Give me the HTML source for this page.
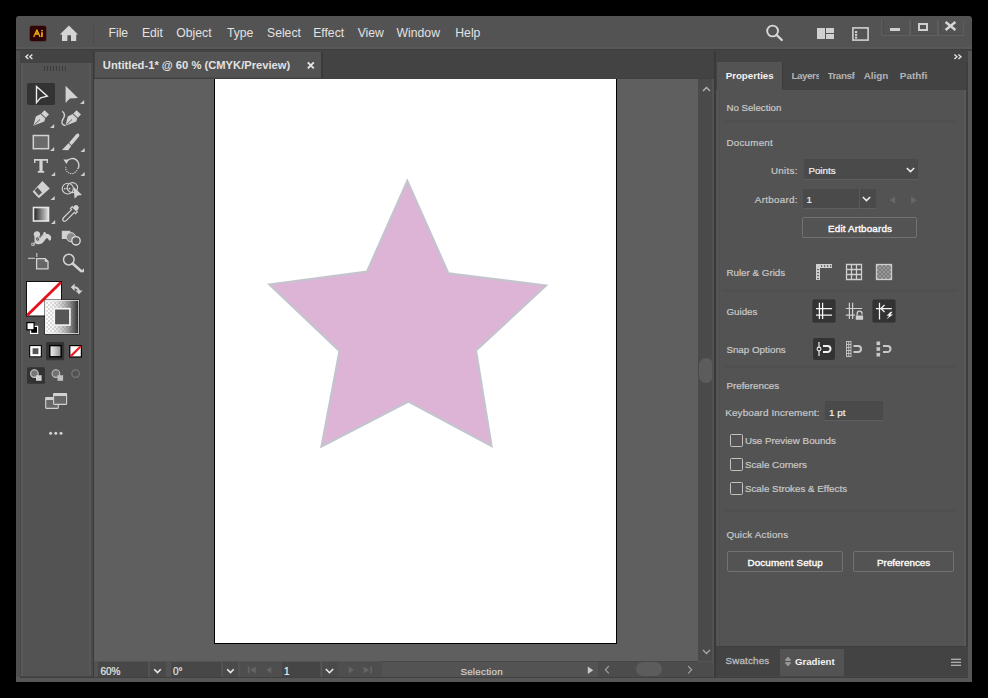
<!DOCTYPE html>
<html><head><meta charset="utf-8">
<style>
*{margin:0;padding:0;box-sizing:border-box}
html,body{width:988px;height:698px;background:#000;overflow:hidden}
body{position:relative;font-family:"Liberation Sans",sans-serif}
.a{position:absolute}
.t{position:absolute;white-space:nowrap}
svg{shape-rendering:geometricPrecision}
</style></head><body>
<div class="a" style="left:16px;top:16px;width:956px;height:666px;background:#535353;border-radius:3px 3px 0 0"></div>
<div class="a" style="left:30px;top:26px;width:16px;height:15px;background:#2e0404;border-radius:2px;box-shadow:0 0 0 0.6px #4a2a2a"></div>
<svg class="a" style="left:30px;top:26px;" width="16" height="15" viewBox="0 0 16 15"><path d="M6.9 3.8 L3.7 11 M6.9 3.8 L10.1 11 M5.1 8 H8.7" fill="none" stroke="#f2ac0c" stroke-width="1.25"/><circle cx="6.9" cy="6.8" r="1" fill="none" stroke="#f2ac0c" stroke-width="0.9"/><rect x="11.1" y="6.2" width="1.7" height="4.8" fill="#f2ac0c"/><rect x="11.1" y="4" width="1.7" height="1.3" fill="#f2ac0c"/></svg>
<svg class="a" style="left:59px;top:24px;" width="21" height="18" viewBox="0 0 21 18"><path d="M9.9 1.5 L19 10.6 L17.2 10.6 L17.2 17 L12 17 L12 11.2 L8.4 11.2 L8.4 17 L3 17 L3 10.6 L0.8 10.6 Z" fill="#d4d4d4"/></svg>
<div class="a" style="left:93px;top:24px;width:1px;height:20px;background:#4b4b4b;"></div>
<div class="t" style="left:108.50px;top:27.47px;font-size:12.2px;line-height:12.2px;font-weight:normal;color:#e2e2e2;">File</div>
<div class="t" style="left:141.90px;top:27.47px;font-size:12.2px;line-height:12.2px;font-weight:normal;color:#e2e2e2;">Edit</div>
<div class="t" style="left:176.30px;top:27.47px;font-size:12.2px;line-height:12.2px;font-weight:normal;color:#e2e2e2;">Object</div>
<div class="t" style="left:226.90px;top:27.47px;font-size:12.2px;line-height:12.2px;font-weight:normal;color:#e2e2e2;">Type</div>
<div class="t" style="left:267.00px;top:27.47px;font-size:12.2px;line-height:12.2px;font-weight:normal;color:#e2e2e2;">Select</div>
<div class="t" style="left:313.20px;top:27.47px;font-size:12.2px;line-height:12.2px;font-weight:normal;color:#e2e2e2;">Effect</div>
<div class="t" style="left:357.70px;top:27.47px;font-size:12.2px;line-height:12.2px;font-weight:normal;color:#e2e2e2;">View</div>
<div class="t" style="left:396.60px;top:27.47px;font-size:12.2px;line-height:12.2px;font-weight:normal;color:#e2e2e2;">Window</div>
<div class="t" style="left:455.30px;top:27.47px;font-size:12.2px;line-height:12.2px;font-weight:normal;color:#e2e2e2;">Help</div>
<svg class="a" style="left:764px;top:23px;" width="20" height="19" viewBox="0 0 20 19"><circle cx="8.6" cy="8" r="5.4" fill="none" stroke="#d8d8d8" stroke-width="1.9"/><path d="M12.6 12 L17.8 17" stroke="#d8d8d8" stroke-width="2.4" stroke-linecap="round"/></svg>
<div class="a" style="left:817px;top:28px;width:8px;height:11px;background:#d0d0d0;"></div>
<div class="a" style="left:826px;top:28px;width:8px;height:5px;background:#d0d0d0;"></div>
<div class="a" style="left:826px;top:34px;width:8px;height:5px;background:#d0d0d0;"></div>
<svg class="a" style="left:852px;top:27px;" width="17" height="14" viewBox="0 0 17 14"><rect x="0.9" y="0.9" width="15.2" height="12.2" fill="none" stroke="#d0d0d0" stroke-width="1.6"/><rect x="3" y="4" width="2.2" height="2" fill="#d0d0d0"/><rect x="3" y="6.8" width="2.2" height="2" fill="#d0d0d0"/><rect x="3" y="9.6" width="2.2" height="2" fill="#d0d0d0"/></svg>
<div class="a" style="left:881px;top:20px;width:29px;height:16px;background:transparent;border-left:1px solid #5d5d5d;border-right:1px solid #5d5d5d;border-bottom:1px solid #5f5f5f"></div>
<div class="a" style="left:883px;top:20px;width:1px;height:13px;background:#4d4d4d;"></div>
<div class="a" style="left:883px;top:33px;width:25px;height:1px;background:#4f4f4f;"></div>
<div class="a" style="left:910px;top:20px;width:28px;height:16px;background:transparent;border-left:1px solid #5d5d5d;border-right:1px solid #5d5d5d;border-bottom:1px solid #5f5f5f"></div>
<div class="a" style="left:912px;top:20px;width:1px;height:13px;background:#4d4d4d;"></div>
<div class="a" style="left:912px;top:33px;width:24px;height:1px;background:#4f4f4f;"></div>
<div class="a" style="left:938px;top:20px;width:26px;height:16px;background:transparent;border-left:1px solid #5d5d5d;border-right:1px solid #5d5d5d;border-bottom:1px solid #5f5f5f"></div>
<div class="a" style="left:940px;top:20px;width:1px;height:13px;background:#4d4d4d;"></div>
<div class="a" style="left:940px;top:33px;width:22px;height:1px;background:#4f4f4f;"></div>
<div class="a" style="left:890px;top:28px;width:10px;height:3px;background:#cfcfcf;"></div>
<div class="a" style="left:918px;top:23px;width:10px;height:8px;background:transparent;border:2px solid #cfcfcf"></div>
<svg class="a" style="left:944px;top:21px;" width="13" height="10" viewBox="0 0 13 10"><path d="M1.6 1 L11.4 9 M11.4 1 L1.6 9" stroke="#d8d8d8" stroke-width="2.3"/></svg>
<div class="a" style="left:16px;top:47px;width:956px;height:2px;background:#585858;"></div>
<div class="a" style="left:16px;top:49px;width:956px;height:1px;background:#3c3c3c;"></div>
<div class="a" style="left:16px;top:50px;width:956px;height:1px;background:#444444;"></div>
<div class="a" style="left:16px;top:51px;width:4px;height:626px;background:#4f4f4f;"></div>
<div class="a" style="left:20px;top:51px;width:74px;height:626px;background:#474747;"></div>
<div class="a" style="left:20px;top:51px;width:73px;height:12px;background:#434343;"></div>
<div class="a" style="left:21px;top:63px;width:70px;height:613px;background:#535353;"></div>
<div class="a" style="left:21px;top:63px;width:2px;height:613px;background:#595959;"></div>
<div class="a" style="left:89px;top:63px;width:2px;height:613px;background:#585858;"></div>
<div class="a" style="left:91px;top:63px;width:2px;height:613px;background:#4a4a4a;"></div>
<div class="a" style="left:93px;top:51px;width:1px;height:626px;background:#3a3a3a;"></div>
<div class="a" style="left:21px;top:676px;width:72px;height:1px;background:#474747;"></div>
<svg class="a" style="left:24px;top:53px;" width="10" height="8" viewBox="0 0 10 8"><path d="M4.4 1.6 L1.8 3.8 L4.4 6 M8.4 1.6 L5.8 3.8 L8.4 6" fill="none" stroke="#e6e6e6" stroke-width="1.3"/></svg>
<div class="a" style="left:44px;top:66px;width:22px;height:5px;background:repeating-linear-gradient(90deg,#3c3c3c 0 1px,transparent 1px 3px)"></div>
<svg class="a" style="left:0;top:0" width="988" height="698" viewBox="0 0 988 698"><rect x="27" y="83" width="28" height="22" rx="2" fill="#333333"/><path d="M36.5 86.5 L47.3 96.2 L40.6 97.8 L36.5 102.6 Z" fill="none" stroke="#ececec" stroke-width="1.4" stroke-linejoin="miter"/><path d="M65.6 85.8 L78 98 L69.8 98.6 L65.6 103 Z" fill="#d2d2d2"/><path d="M84.2 100 L84.2 104 L80 104 Z" fill="#cfcfcf"/><g transform="translate(0,0)"><path d="M41.3 113.4 L44.6 110.2 L49 114.6 L45.8 117.7 Z" fill="#d2d2d2"/><path d="M40.6 114 L45.2 118.5 L44.3 121.6 L33.4 125.8 L35.8 116.5 Z" fill="#d2d2d2"/><path d="M34.5 124.7 L40 119.5" stroke="#555" stroke-width="0.9"/></g><path d="M54.2 124 L54.2 128 L50 128 Z" fill="#cfcfcf"/><g transform="translate(32,0)"><path d="M41.3 113.4 L44.6 110.2 L49 114.6 L45.8 117.7 Z" fill="#d2d2d2"/><path d="M40.6 114 L45.2 118.5 L44.3 121.6 L33.4 125.8 L35.8 116.5 Z" fill="#d2d2d2"/><path d="M34.5 124.7 L40 119.5" stroke="#555" stroke-width="0.9"/></g><path d="M62.3 111.3 C65 113.5 65 116.5 62.8 119.5 C60.8 122.5 62 125.2 65.4 125.6" fill="none" stroke="#d2d2d2" stroke-width="1.4"/><rect x="33.3" y="135.5" width="15.2" height="13.2" fill="#6a6a6a" stroke="#d2d2d2" stroke-width="1.5"/><path d="M54.2 147 L54.2 151 L50 151 Z" fill="#cfcfcf"/><path d="M78.6 133.8 C79.8 134.8 79.5 136 78.6 137 L71.6 145.2 L69 142.8 L76 134.4 C76.9 133.5 77.8 133.2 78.6 133.8 Z" fill="#d2d2d2"/><path d="M68.4 143.3 L71.2 146 L68.2 150.2 L62 150 Z" fill="#d2d2d2"/><path d="M84.7 148 L84.7 152 L80.5 152 Z" fill="#cfcfcf"/><path d="M34 159 H48 V163 H46.6 V160.8 H42.6 V171 H44.2 V172.8 H37.8 V171 H39.4 V160.8 H35.4 V163 H34 Z" fill="#d2d2d2"/><path d="M55.2 172 L55.2 176 L51 176 Z" fill="#cfcfcf"/><path d="M67 161.2 A5.8 5.8 0 1 1 77.6 169.2" fill="none" stroke="#d2d2d2" stroke-width="1.4"/><path d="M76.8 170.2 A5.8 5.8 0 0 1 65.8 166.8" fill="none" stroke="#d2d2d2" stroke-width="1.2" stroke-dasharray="1.2 1"/><path d="M63.4 159.4 L68.6 159.6 L66.6 164 Z" fill="#d2d2d2"/><path d="M84.7 172 L84.7 176 L80.5 176 Z" fill="#cfcfcf"/><path d="M42.4 181 L49.8 188.6 L38.8 198.2 L32.6 191.8 Z" fill="#d2d2d2"/><path d="M34.5 190.5 L37.6 187.6 L42 192.5 L38.8 195.6 Z" fill="#555"/><path d="M54.7 196 L54.7 200 L50.5 200 Z" fill="#cfcfcf"/><ellipse cx="67.8" cy="188.6" rx="5.6" ry="5.4" fill="none" stroke="#d2d2d2" stroke-width="1.1"/><ellipse cx="72.4" cy="187.6" rx="5.2" ry="5" fill="none" stroke="#d2d2d2" stroke-width="1.1"/><circle cx="64.8" cy="188.6" r="0.9" fill="#d2d2d2"/><circle cx="67.2" cy="188.6" r="0.9" fill="#d2d2d2"/><circle cx="69.6" cy="188.6" r="0.9" fill="#d2d2d2"/><path d="M73.6 186.8 L82 195 L77.8 195.6 L74.6 198.8 Z" fill="#d2d2d2"/><defs><linearGradient id="g1" x1="0" x2="1"><stop offset="0" stop-color="#1e1e1e"/><stop offset="1" stop-color="#e0e0e0"/></linearGradient><linearGradient id="g2" x1="0" x2="1"><stop offset="0" stop-color="#ffffff" stop-opacity="0"/><stop offset="1" stop-color="#2e2e2e"/></linearGradient><pattern id="chk" width="4" height="4" patternUnits="userSpaceOnUse"><rect width="4" height="4" fill="#ffffff"/><rect width="2" height="2" fill="#d8d8d8"/><rect x="2" y="2" width="2" height="2" fill="#d8d8d8"/></pattern></defs><rect x="33.5" y="207.5" width="15" height="13.5" fill="url(#g1)" stroke="#e6e6e6" stroke-width="1.6"/><path d="M55.2 220 L55.2 224 L51 224 Z" fill="#cfcfcf"/><path d="M74.6 206.3 C76.6 204.6 79.2 206.6 77.8 209 L76.2 210.6 L77.4 211.8 L75.6 213.6 L74.4 212.4 L67 219.8 C65.6 221.2 63.8 221.4 63.2 220.8 C62.6 220.2 62.8 218.4 64.2 217 L71.6 209.6 L70.4 208.4 L72.2 206.6 L73.4 207.8 Z" fill="none" stroke="#d2d2d2" stroke-width="1.2"/><path d="M74.6 206.3 C76.6 204.6 79.2 206.6 77.8 209 L75.8 211 L73 208.2 Z" fill="#d2d2d2"/><path d="M34 233 C35.5 230.5 39 230.6 40 233.2 C40.8 235.5 39 236.6 38.2 238.5 C40.5 238.6 42.5 236.2 44 234.6 C46 232.8 49.8 233.6 51 236.5 C51.8 238.8 50.6 241.2 49.2 240.6 C48.2 240 48.6 237.8 46.8 238.2 C45 238.8 44.2 242.2 41.6 243.6 C39.6 244.6 36.2 244.4 35 243 C34 241.6 34.8 238.6 34.4 236.6 C34 235.4 33.4 234 34 233 Z" fill="#d2d2d2"/><circle cx="37.6" cy="239" r="2.2" fill="#555" stroke="#d2d2d2" stroke-width="1"/><path d="M36.2 240.4 L39 237.6" stroke="#d2d2d2" stroke-width="0.8"/><path d="M33 244.5 L35.6 242" stroke="#d2d2d2" stroke-width="1"/><rect x="31.8" y="243.2" width="2.4" height="2.4" fill="none" stroke="#d2d2d2" stroke-width="0.8"/><path d="M40.5 237 L44 234" stroke="#d2d2d2" stroke-width="1"/><circle cx="44.6" cy="233.4" r="1.3" fill="#d2d2d2"/><rect x="61.8" y="230.8" width="8.6" height="8.2" fill="#d2d2d2"/><circle cx="71" cy="237.2" r="4.6" fill="#8a8a8a" stroke="#d2d2d2" stroke-width="1"/><circle cx="76" cy="240.8" r="4.2" fill="#5a5a5a" stroke="#e0e0e0" stroke-width="1.3"/><path d="M36.6 258.6 H45.2 L48 261.4 V268.8 H36.6 Z" fill="#666" stroke="#d2d2d2" stroke-width="1.3"/><path d="M45.2 258.6 V261.4 H48" fill="#d2d2d2" stroke="#d2d2d2" stroke-width="1"/><path d="M28 258.3 H35 M36.8 253 V257" stroke="#d2d2d2" stroke-width="1"/><circle cx="68.8" cy="259.6" r="5.3" fill="none" stroke="#d2d2d2" stroke-width="1.5"/><path d="M72.6 263.6 L80.8 270.8" stroke="#d2d2d2" stroke-width="2.6" stroke-linecap="round"/><path d="M84 268.2 L84 272.2 L80 272.2 Z" fill="#d2d2d2"/><rect x="26.5" y="281.5" width="35" height="34.5" fill="#ffffff" stroke="#111" stroke-width="1"/><path d="M27.3 315.2 L61 282.2" stroke="#e8101c" stroke-width="2.8"/><rect x="44.5" y="299.5" width="35" height="35" fill="#1a1a1a"/><rect x="45.8" y="300.8" width="32.4" height="32.4" fill="url(#chk)" stroke="#f2f2f2" stroke-width="1.6"/><rect x="45.7" y="300.7" width="32.6" height="32.6" fill="url(#g2)"/><rect x="54.3" y="308.7" width="15.6" height="16.4" fill="#565656" stroke="#f6f6f6" stroke-width="1.6"/><path d="M73.4 287.2 C76.6 287.2 78.8 288.8 79.2 291.6" fill="none" stroke="#d2d2d2" stroke-width="1.9"/><path d="M70.8 287.2 L74.6 283.4 L74.6 291 Z" fill="#d2d2d2"/><path d="M75.4 290.6 L82.6 290.6 L79 294.2 Z" fill="#d2d2d2"/><rect x="30.6" y="326.4" width="7" height="7" fill="#000" stroke="#fff" stroke-width="1.2"/><rect x="26.9" y="322.6" width="7.2" height="7.2" fill="#fff" stroke="#000" stroke-width="1.2"/><rect x="29.2" y="345.1" width="12.6" height="12.2" fill="#000"/><rect x="30.2" y="346.1" width="10.6" height="10.2" fill="#fff"/><rect x="32.6" y="348.3" width="5.8" height="5.8" fill="#555"/><rect x="46" y="342" width="18.2" height="18.2" rx="1.5" fill="#343434"/><rect x="49.8" y="345.6" width="11.4" height="11.2" fill="url(#g3)" stroke="#000" stroke-width="1.4"/><defs><linearGradient id="g3" x1="0" x2="1"><stop offset="0" stop-color="#f2f2f2"/><stop offset="0.5" stop-color="#c4c4c4"/><stop offset="1" stop-color="#8c8c8c"/></linearGradient></defs><rect x="69.8" y="345.6" width="11.6" height="11.4" fill="#fff" stroke="#000" stroke-width="1.2"/><path d="M70.6 356.4 L80.8 346.2" stroke="#ee1c24" stroke-width="2.2"/><rect x="27" y="367.2" width="18" height="16.6" rx="1.5" fill="#333333"/><g transform="translate(0,0)" opacity="1"><circle cx="34.4" cy="373.6" r="3.8" fill="#777" stroke="#d2d2d2" stroke-width="1.1"/><rect x="36" y="375.2" width="5.6" height="5.6" fill="#d2d2d2"/></g><g transform="translate(21.5,0)" opacity="0.85"><circle cx="34.4" cy="373.6" r="3.8" fill="#777" stroke="#d2d2d2" stroke-width="1.1"/><rect x="36" y="375.2" width="5.6" height="5.6" fill="#d2d2d2"/></g><circle cx="75.6" cy="373.6" r="3.8" fill="none" stroke="#777" stroke-width="1.2"/><rect x="45.7" y="397.6" width="12.6" height="10.8" rx="0.6" fill="#686868" stroke="#d2d2d2" stroke-width="1.1"/><rect x="45.7" y="397.6" width="12.6" height="2.4" fill="#d2d2d2"/><rect x="53.6" y="393.5" width="13" height="10.9" rx="0.6" fill="#686868" stroke="#d2d2d2" stroke-width="1.1"/><rect x="53.6" y="393.5" width="13" height="2.5" fill="#d2d2d2"/><circle cx="50.6" cy="433.2" r="1.5" fill="#d2d2d2"/><circle cx="55.8" cy="433.2" r="1.5" fill="#d2d2d2"/><circle cx="61" cy="433.2" r="1.5" fill="#d2d2d2"/></svg>
<div class="a" style="left:94px;top:51px;width:622px;height:28px;background:#434343;"></div>
<div class="a" style="left:95px;top:52px;width:226px;height:25px;background:#535353;"></div>
<div class="a" style="left:95px;top:77px;width:226px;height:1px;background:#4c4c4c;"></div>
<div class="a" style="left:321px;top:52px;width:1.5px;height:26px;background:#3a3a3a;"></div>
<div class="t" style="left:102.80px;top:59.72px;font-size:11.2px;line-height:11.2px;font-weight:bold;color:#e2e2e2;">Untitled-1* @ 60 % (CMYK/Preview)</div>
<svg class="a" style="left:306px;top:61px;" width="10" height="9" viewBox="0 0 10 9"><path d="M1.8 1.4 L7.8 7.4 M7.8 1.4 L1.8 7.4" stroke="#e6e6e6" stroke-width="1.9"/></svg>
<div class="a" style="left:94px;top:78px;width:619px;height:1px;background:#3f3f3f;"></div>
<div class="a" style="left:94px;top:79px;width:604px;height:582px;background:#5f5f5f;"></div>
<div class="a" style="left:214px;top:79px;width:403px;height:565px;background:#ffffff;border:1px solid #000;border-top:none"></div>
<svg class="a" style="left:214px;top:79px;" width="403" height="565" viewBox="0 0 403 565"><defs><filter id="bl" x="-5%" y="-5%" width="110%" height="110%"><feGaussianBlur stdDeviation="0.7"/></filter></defs><polygon points="193.3,102 234.4,194.4 332,206.5 262,271.5 277.5,367 194.5,322.5 107.5,367.5 125.5,272 55.5,205.5 153.1,192.5" transform="translate(0,0)" fill="#deb4d6" stroke="#c4c4ce" stroke-width="2.2" stroke-linejoin="miter" filter="url(#bl)"/></svg>
<div class="a" style="left:698px;top:79px;width:15px;height:582px;background:#4a4a4a;"></div>
<svg class="a" style="left:702px;top:86px;" width="9" height="6" viewBox="0 0 9 6"><path d="M1 5 L4.5 1.5 L8 5" fill="none" stroke="#b4b4b4" stroke-width="1.4"/></svg>
<svg class="a" style="left:702px;top:649px;" width="9" height="6" viewBox="0 0 9 6"><path d="M1 1 L4.5 4.5 L8 1" fill="none" stroke="#a8a8a8" stroke-width="1.3"/></svg>
<div class="a" style="left:699px;top:358px;width:14px;height:25px;background:#5c5c5c;border-radius:7px 7px 7px 7px"></div>
<div class="a" style="left:712px;top:79px;width:2px;height:582px;background:#525252;"></div>
<div class="a" style="left:714px;top:51px;width:2px;height:626px;background:#3a3a3a;"></div>
<div class="a" style="left:716px;top:51px;width:1px;height:626px;background:#474747;"></div>
<div class="a" style="left:94px;top:661px;width:619px;height:16px;background:#535353;"></div>
<div class="a" style="left:98px;top:662px;width:50px;height:15px;background:#474747;"></div>
<div class="a" style="left:150px;top:662px;width:16px;height:15px;background:#4a4a4a;"></div>
<div class="t" style="left:100.40px;top:666.53px;font-size:10px;line-height:10px;font-weight:normal;color:#e6e6e6;-webkit-text-stroke:0.2px #e6e6e6;">60%</div>
<svg class="a" style="left:153px;top:668px;" width="9" height="6" viewBox="0 0 9 6"><path d="M1.2 1.2 L4.5 4.5 L7.8 1.2" fill="none" stroke="#e8e8e8" stroke-width="1.6"/></svg>
<div class="a" style="left:171px;top:662px;width:50px;height:15px;background:#474747;"></div>
<div class="a" style="left:223px;top:662px;width:15px;height:15px;background:#4a4a4a;"></div>
<div class="t" style="left:172.90px;top:666.53px;font-size:10px;line-height:10px;font-weight:normal;color:#e6e6e6;-webkit-text-stroke:0.2px #e6e6e6;">0°</div>
<svg class="a" style="left:226px;top:668px;" width="9" height="6" viewBox="0 0 9 6"><path d="M1.2 1.2 L4.5 4.5 L7.8 1.2" fill="none" stroke="#e8e8e8" stroke-width="1.6"/></svg>
<div class="a" style="left:240px;top:662px;width:142px;height:15px;background:#4e4e4e;"></div>
<svg class="a" style="left:247px;top:666px;" width="10" height="8" viewBox="0 0 10 8"><rect x="0.8" y="0.6" width="1.6" height="7" fill="#646464"/><path d="M8.8 0.6 L3 4.1 L8.8 7.6 Z" fill="#646464"/></svg>
<svg class="a" style="left:266px;top:666px;" width="6" height="8" viewBox="0 0 6 8"><path d="M5.4 0.6 L0.4 4.1 L5.4 7.6 Z" fill="#646464"/></svg>
<div class="a" style="left:282px;top:662px;width:38px;height:15px;background:#454545;"></div>
<div class="t" style="left:284.00px;top:666.53px;font-size:10px;line-height:10px;font-weight:normal;color:#f2f2f2;-webkit-text-stroke:0.2px #f2f2f2;">1</div>
<div class="a" style="left:321px;top:662px;width:17px;height:15px;background:#4a4a4a;border-left:1px solid #5a5a5a"></div>
<svg class="a" style="left:325px;top:668px;" width="9" height="6" viewBox="0 0 9 6"><path d="M0.8 1 L4.5 4.7 L8.2 1" fill="none" stroke="#eeeeee" stroke-width="1.5"/></svg>
<svg class="a" style="left:348px;top:666px;" width="6" height="8" viewBox="0 0 6 8"><path d="M0.8 0.6 L5.8 4.1 L0.8 7.6 Z" fill="#646464"/></svg>
<svg class="a" style="left:363px;top:666px;" width="10" height="8" viewBox="0 0 10 8"><path d="M0.6 0.6 L6.4 4.1 L0.6 7.6 Z" fill="#646464"/><rect x="7.4" y="0.6" width="1.6" height="7" fill="#646464"/></svg>
<div class="t" style="left:460.40px;top:666.70px;font-size:9.8px;line-height:9.8px;font-weight:normal;color:#d2d2d2;letter-spacing:0.25px;-webkit-text-stroke:0.2px #d2d2d2;">Selection</div>
<svg class="a" style="left:587px;top:666px;" width="7" height="9" viewBox="0 0 7 9"><path d="M0.8 0.4 L6.2 4.2 L0.8 8 Z" fill="#c8c8c8"/></svg>
<div class="a" style="left:382px;top:661px;width:316px;height:1px;background:#474747;"></div>
<div class="a" style="left:598px;top:662px;width:115px;height:15px;background:#4c4c4c;"></div>
<svg class="a" style="left:603px;top:665px;" width="8" height="10" viewBox="0 0 8 10"><path d="M5.8 1.2 L2.4 4.8 L5.8 8.4" fill="none" stroke="#a8a8a8" stroke-width="1.1"/></svg>
<div class="a" style="left:636px;top:662px;width:26px;height:14px;background:#5c5c5c;border-radius:7px"></div>
<svg class="a" style="left:686px;top:665px;" width="8" height="10" viewBox="0 0 8 10"><path d="M2.2 1.2 L5.6 4.8 L2.2 8.4" fill="none" stroke="#a8a8a8" stroke-width="1.1"/></svg>
<div class="a" style="left:716px;top:51px;width:256px;height:626px;background:#535353;"></div>
<div class="a" style="left:716px;top:51px;width:252px;height:11px;background:#434343;"></div>
<div class="a" style="left:716px;top:62px;width:250px;height:28px;background:#434343;"></div>
<div class="a" style="left:717px;top:62px;width:65px;height:28px;background:#535353;"></div>
<div class="a" style="left:782px;top:62px;width:1px;height:27px;background:#3c3c3c;"></div>
<div class="a" style="left:717px;top:90px;width:2px;height:557px;background:#555555;"></div>
<div class="a" style="left:719px;top:90px;width:1px;height:557px;background:#4f4f4f;"></div>
<div class="a" style="left:964px;top:90px;width:2px;height:557px;background:#595959;"></div>
<div class="a" style="left:966px;top:62px;width:2px;height:615px;background:#3e3e3e;"></div>
<svg class="a" style="left:953px;top:53px;" width="10" height="8" viewBox="0 0 10 8"><path d="M1.4 1.6 L4 3.8 L1.4 6 M5.4 1.6 L8 3.8 L5.4 6" fill="none" stroke="#e6e6e6" stroke-width="1.3"/></svg>
<div class="t" style="left:725.70px;top:70.99px;font-size:9.7px;line-height:9.7px;font-weight:bold;color:#f2f2f2;">Properties</div>
<div class="a" style="left:792px;top:68px;width:27px;height:14px;overflow:hidden">
<div class="t" style="left:-0.60px;top:2.82px;font-size:9.9px;line-height:9.9px;font-weight:bold;color:#b4b4b4;letter-spacing:-0.45px;">Layers</div>
</div>
<div class="a" style="left:828px;top:68px;width:27px;height:14px;overflow:hidden">
<div class="t" style="left:-0.60px;top:2.82px;font-size:9.9px;line-height:9.9px;font-weight:bold;color:#b4b4b4;letter-spacing:-0.45px;">Transform</div>
</div>
<div class="t" style="left:863.70px;top:70.82px;font-size:9.9px;line-height:9.9px;font-weight:bold;color:#b4b4b4;">Align</div>
<div class="a" style="left:900px;top:68px;width:28px;height:14px;overflow:hidden">
<div class="t" style="left:-0.20px;top:2.82px;font-size:9.9px;line-height:9.9px;font-weight:bold;color:#b4b4b4;">Pathfinder</div>
</div>
<div class="t" style="left:726.40px;top:102.89px;font-size:9.7px;line-height:9.7px;font-weight:normal;color:#c9c9c9;-webkit-text-stroke:0.2px #c9c9c9;">No Selection</div>
<div class="a" style="left:722px;top:120px;width:236px;height:3px;background:#505050;"></div>
<div class="t" style="left:726.40px;top:137.90px;font-size:9.8px;line-height:9.8px;font-weight:normal;color:#c9c9c9;letter-spacing:0.25px;-webkit-text-stroke:0.2px #c9c9c9;">Document</div>
<div class="t" style="left:770.90px;top:165.70px;font-size:9.8px;line-height:9.8px;font-weight:normal;color:#c9c9c9;letter-spacing:0.3px;-webkit-text-stroke:0.2px #c9c9c9;">Units:</div>
<div class="a" style="left:804px;top:159px;width:114px;height:21px;background:#4a4a4a;border-bottom:1px solid #5e5e5e"></div>
<div class="t" style="left:808.40px;top:165.90px;font-size:9.8px;line-height:9.8px;font-weight:normal;color:#f0f0f0;-webkit-text-stroke:0.2px #f0f0f0;">Points</div>
<svg class="a" style="left:906px;top:167px;" width="9" height="6" viewBox="0 0 9 6"><path d="M0.8 1 L4.5 4.6 L8.2 1" fill="none" stroke="#eeeeee" stroke-width="1.5"/></svg>
<div class="t" style="left:754.80px;top:194.70px;font-size:9.8px;line-height:9.8px;font-weight:normal;color:#c9c9c9;letter-spacing:0.3px;-webkit-text-stroke:0.2px #c9c9c9;">Artboard:</div>
<div class="a" style="left:803px;top:189px;width:56px;height:20px;background:#4a4a4a;border-bottom:1px solid #5e5e5e"></div>
<div class="a" style="left:859px;top:189px;width:17px;height:20px;background:#4a4a4a;border-left:1px solid #5a5a5a;border-bottom:1px solid #5e5e5e"></div>
<div class="t" style="left:806.40px;top:194.90px;font-size:9.8px;line-height:9.8px;font-weight:normal;color:#f0f0f0;-webkit-text-stroke:0.2px #f0f0f0;">1</div>
<svg class="a" style="left:862px;top:196px;" width="9" height="6" viewBox="0 0 9 6"><path d="M0.8 1 L4.5 4.6 L8.2 1" fill="none" stroke="#eeeeee" stroke-width="1.5"/></svg>
<svg class="a" style="left:889px;top:196px;" width="8" height="9" viewBox="0 0 8 9"><path d="M0.6 4.2 L6 0.6 L6 7.8 Z" fill="#686868"/></svg>
<svg class="a" style="left:910px;top:196px;" width="8" height="9" viewBox="0 0 8 9"><path d="M6.6 4.2 L1.2 0.6 L1.2 7.8 Z" fill="#686868"/></svg>
<div class="a" style="left:802px;top:217px;width:115px;height:21px;background:#535353;border:1px solid #727272;border-radius:2px"></div>
<div class="t" style="left:828.00px;top:223.82px;font-size:9.9px;line-height:9.9px;font-weight:normal;color:#ffffff;letter-spacing:0.15px;-webkit-text-stroke:0.35px #fff;">Edit Artboards</div>
<div class="t" style="left:726.40px;top:268.10px;font-size:9.8px;line-height:9.8px;font-weight:normal;color:#c9c9c9;-webkit-text-stroke:0.2px #c9c9c9;">Ruler &amp; Grids</div>
<svg class="a" style="left:815px;top:263px;" width="18" height="18" viewBox="0 0 18 18"><path d="M1 1 H17 V5 H5 V17 H1 Z" fill="#cfcfcf"/><g fill="#535353"><rect x="2.2" y="6" width="1.6" height="1.2"/><rect x="2.2" y="9" width="1.6" height="1.2"/><rect x="2.2" y="12" width="1.6" height="1.2"/><rect x="2.2" y="15" width="1.6" height="1.2"/><rect x="6" y="2.2" width="1.2" height="1.6"/><rect x="9" y="2.2" width="1.2" height="1.6"/><rect x="12" y="2.2" width="1.2" height="1.6"/><rect x="15" y="2.2" width="1.2" height="1.6"/></g></svg>
<svg class="a" style="left:845px;top:263px;" width="18" height="18" viewBox="0 0 18 18"><path d="M1.5 1.5 H16.5 V16.5 H1.5 Z M6.5 1.5 V16.5 M11.5 1.5 V16.5 M1.5 6.5 H16.5 M1.5 11.5 H16.5" fill="none" stroke="#cfcfcf" stroke-width="1.3"/></svg>
<svg class="a" style="left:875px;top:263px;" width="18" height="18" viewBox="0 0 18 18"><defs><pattern id="pg" width="4" height="4" patternUnits="userSpaceOnUse"><rect width="4" height="4" fill="#7a7a7a"/><rect width="2" height="2" fill="#9a9a9a"/><rect x="2" y="2" width="2" height="2" fill="#9a9a9a"/></pattern></defs><rect x="1.5" y="1.5" width="15" height="15" fill="url(#pg)" stroke="#cfcfcf" stroke-width="1.3"/></svg>
<div class="a" style="left:722px;top:289px;width:236px;height:3px;background:#505050;"></div>
<div class="t" style="left:726.40px;top:306.70px;font-size:9.8px;line-height:9.8px;font-weight:normal;color:#c9c9c9;-webkit-text-stroke:0.2px #c9c9c9;">Guides</div>
<div class="a" style="left:813px;top:300px;width:22px;height:22px;background:#333333;border-radius:1px;box-shadow:0 0 0 0.5px #2e2e2e"></div>
<svg class="a" style="left:813px;top:300px;" width="22" height="22" viewBox="0 0 22 22"><path d="M6.4 2.7 V19.1 M9.6 2.7 V19.1 M3 8.5 H19.1 M3 15.2 H19.1" stroke="#f6f6f6" stroke-width="1.25"/></svg>
<svg class="a" style="left:843px;top:300px;" width="22" height="22" viewBox="0 0 22 22"><path d="M6.4 2.7 V19.1 M9.6 2.7 V19.1 M2.8 8.5 H19.2 M2.8 15.2 H12" stroke="#cfcfcf" stroke-width="1.2"/><path d="M14.2 15.5 V13.6 A2.4 2.4 0 0 1 19 13.6 V14.4" fill="none" stroke="#cfcfcf" stroke-width="1.3"/><rect x="12.8" y="15.5" width="7.3" height="4.3" fill="#cfcfcf"/></svg>
<div class="a" style="left:873px;top:300px;width:22px;height:22px;background:#333333;border-radius:1px;box-shadow:0 0 0 0.5px #2e2e2e"></div>
<svg class="a" style="left:873px;top:300px;" width="22" height="22" viewBox="0 0 22 22"><path d="M6.5 2.7 V19.5 M2.9 8.5 H18.8 M11.5 5 L8 8.5 L11.5 12" fill="none" stroke="#f4f4f4" stroke-width="1.25"/><path d="M17.6 11.8 L13.6 15.8 H16.2 L13.4 19.2 L20.2 14.6 H17.4 L19.6 11.8 Z" fill="#f4f4f4"/></svg>
<div class="t" style="left:726.40px;top:345.10px;font-size:9.8px;line-height:9.8px;font-weight:normal;color:#c9c9c9;-webkit-text-stroke:0.2px #c9c9c9;">Snap Options</div>
<div class="a" style="left:813px;top:338px;width:22px;height:22px;background:#333333;border-radius:2px"></div>
<svg class="a" style="left:813px;top:338px;" width="22" height="22" viewBox="0 0 22 22"><path d="M6 4 V18" stroke="#f0f0f0" stroke-width="1.2"/><circle cx="6" cy="11" r="1.9" fill="#333" stroke="#f0f0f0" stroke-width="1.1"/><path d="M10 8 H14.5 A3 3 0 0 1 14.5 14 H10" fill="none" stroke="#f0f0f0" stroke-width="2"/></svg>
<svg class="a" style="left:843px;top:338px;" width="22" height="22" viewBox="0 0 22 22"><g fill="none" stroke="#c8c8c8" stroke-width="0.9"><rect x="3.5" y="3.5" width="4.5" height="15"/><path d="M3.5 6.5 H8 M3.5 9.5 H8 M3.5 12.5 H8 M3.5 15.5 H8 M5.75 3.5 V18.5"/></g><path d="M10.5 8 H15 A3 3 0 0 1 15 14 H10.5" fill="none" stroke="#c8c8c8" stroke-width="2"/></svg>
<svg class="a" style="left:873px;top:338px;" width="22" height="22" viewBox="0 0 22 22"><g fill="#c8c8c8"><rect x="3.5" y="3.5" width="3.6" height="3.6"/><rect x="3.5" y="9.2" width="3.6" height="3.6"/><rect x="3.5" y="14.9" width="3.6" height="3.6"/></g><path d="M10 8 H14.5 A3 3 0 0 1 14.5 14 H10" fill="none" stroke="#c8c8c8" stroke-width="2"/></svg>
<div class="a" style="left:722px;top:365px;width:236px;height:3px;background:#505050;"></div>
<div class="t" style="left:726.40px;top:381.10px;font-size:9.8px;line-height:9.8px;font-weight:normal;color:#c9c9c9;-webkit-text-stroke:0.2px #c9c9c9;">Preferences</div>
<div class="t" style="left:725.20px;top:407.78px;font-size:9.95px;line-height:9.95px;font-weight:normal;color:#c9c9c9;letter-spacing:0.11px;-webkit-text-stroke:0.2px #c9c9c9;">Keyboard Increment:</div>
<div class="a" style="left:825px;top:401px;width:58px;height:20px;background:#4a4a4a;border-bottom:1px solid #5e5e5e"></div>
<div class="t" style="left:829.00px;top:407.82px;font-size:9.9px;line-height:9.9px;font-weight:normal;color:#f0f0f0;-webkit-text-stroke:0.2px #f0f0f0;">1 pt</div>
<div class="a" style="left:730px;top:434px;width:12.5px;height:12.5px;background:transparent;border:1.2px solid #c2c2c2;border-radius:1.5px"></div>
<div class="t" style="left:744.90px;top:435.90px;font-size:9.8px;line-height:9.8px;font-weight:normal;color:#c9c9c9;-webkit-text-stroke:0.2px #c9c9c9;">Use Preview Bounds</div>
<div class="a" style="left:730px;top:458px;width:12.5px;height:12.5px;background:transparent;border:1.2px solid #c2c2c2;border-radius:1.5px"></div>
<div class="t" style="left:744.90px;top:459.90px;font-size:9.8px;line-height:9.8px;font-weight:normal;color:#c9c9c9;-webkit-text-stroke:0.2px #c9c9c9;">Scale Corners</div>
<div class="a" style="left:730px;top:482px;width:12.5px;height:12.5px;background:transparent;border:1.2px solid #c2c2c2;border-radius:1.5px"></div>
<div class="t" style="left:744.90px;top:483.90px;font-size:9.8px;line-height:9.8px;font-weight:normal;color:#c9c9c9;-webkit-text-stroke:0.2px #c9c9c9;">Scale Strokes &amp; Effects</div>
<div class="a" style="left:722px;top:509px;width:236px;height:3px;background:#505050;"></div>
<div class="t" style="left:726.40px;top:529.90px;font-size:9.8px;line-height:9.8px;font-weight:normal;color:#c9c9c9;letter-spacing:0.2px;-webkit-text-stroke:0.2px #c9c9c9;">Quick Actions</div>
<div class="a" style="left:727px;top:551px;width:116px;height:21px;background:#535353;border:1px solid #727272;border-radius:2px"></div>
<div class="t" style="left:747.40px;top:557.82px;font-size:9.9px;line-height:9.9px;font-weight:normal;color:#ffffff;letter-spacing:0.14px;-webkit-text-stroke:0.35px #fff;">Document Setup</div>
<div class="a" style="left:853px;top:551px;width:101px;height:21px;background:#535353;border:1px solid #727272;border-radius:2px"></div>
<div class="t" style="left:877.00px;top:557.82px;font-size:9.9px;line-height:9.9px;font-weight:normal;color:#ffffff;-webkit-text-stroke:0.35px #fff;">Preferences</div>
<div class="a" style="left:716px;top:646px;width:252px;height:1px;background:#3e3e3e;"></div>
<div class="a" style="left:716px;top:647px;width:252px;height:29px;background:#434343;"></div>
<div class="a" style="left:780px;top:649px;width:64px;height:27px;background:#535353;"></div>
<div class="t" style="left:725.40px;top:656.22px;font-size:9.9px;line-height:9.9px;font-weight:normal;color:#bcbcbc;letter-spacing:0.15px;-webkit-text-stroke:0.3px #bcbcbc;">Swatches</div>
<svg class="a" style="left:784px;top:656px;" width="8" height="11" viewBox="0 0 8 11"><path d="M1.5 4.2 L4 1.2 L6.5 4.2 Z M1.5 6.8 L4 9.8 L6.5 6.8 Z" fill="#8a8a8a" stroke="#b0b0b0" stroke-width="0.9" stroke-linejoin="round"/></svg>
<div class="t" style="left:794.90px;top:656.99px;font-size:9.7px;line-height:9.7px;font-weight:bold;color:#f2f2f2;">Gradient</div>
<svg class="a" style="left:950px;top:657px;" width="12" height="10" viewBox="0 0 12 10"><path d="M1 2.2 H11 M1 5.2 H11 M1 8.2 H11" stroke="#d0d0d0" stroke-width="1.05"/></svg>
<div class="a" style="left:716px;top:676px;width:252px;height:1px;background:#474747;"></div>
<div class="a" style="left:16px;top:677px;width:956px;height:5px;background:#575757;"></div>
<div class="a" style="left:20px;top:677px;width:948px;height:1px;background:#404040;"></div>
<div class="a" style="left:968px;top:51px;width:4px;height:631px;background:#575757;"></div>
</body></html>
